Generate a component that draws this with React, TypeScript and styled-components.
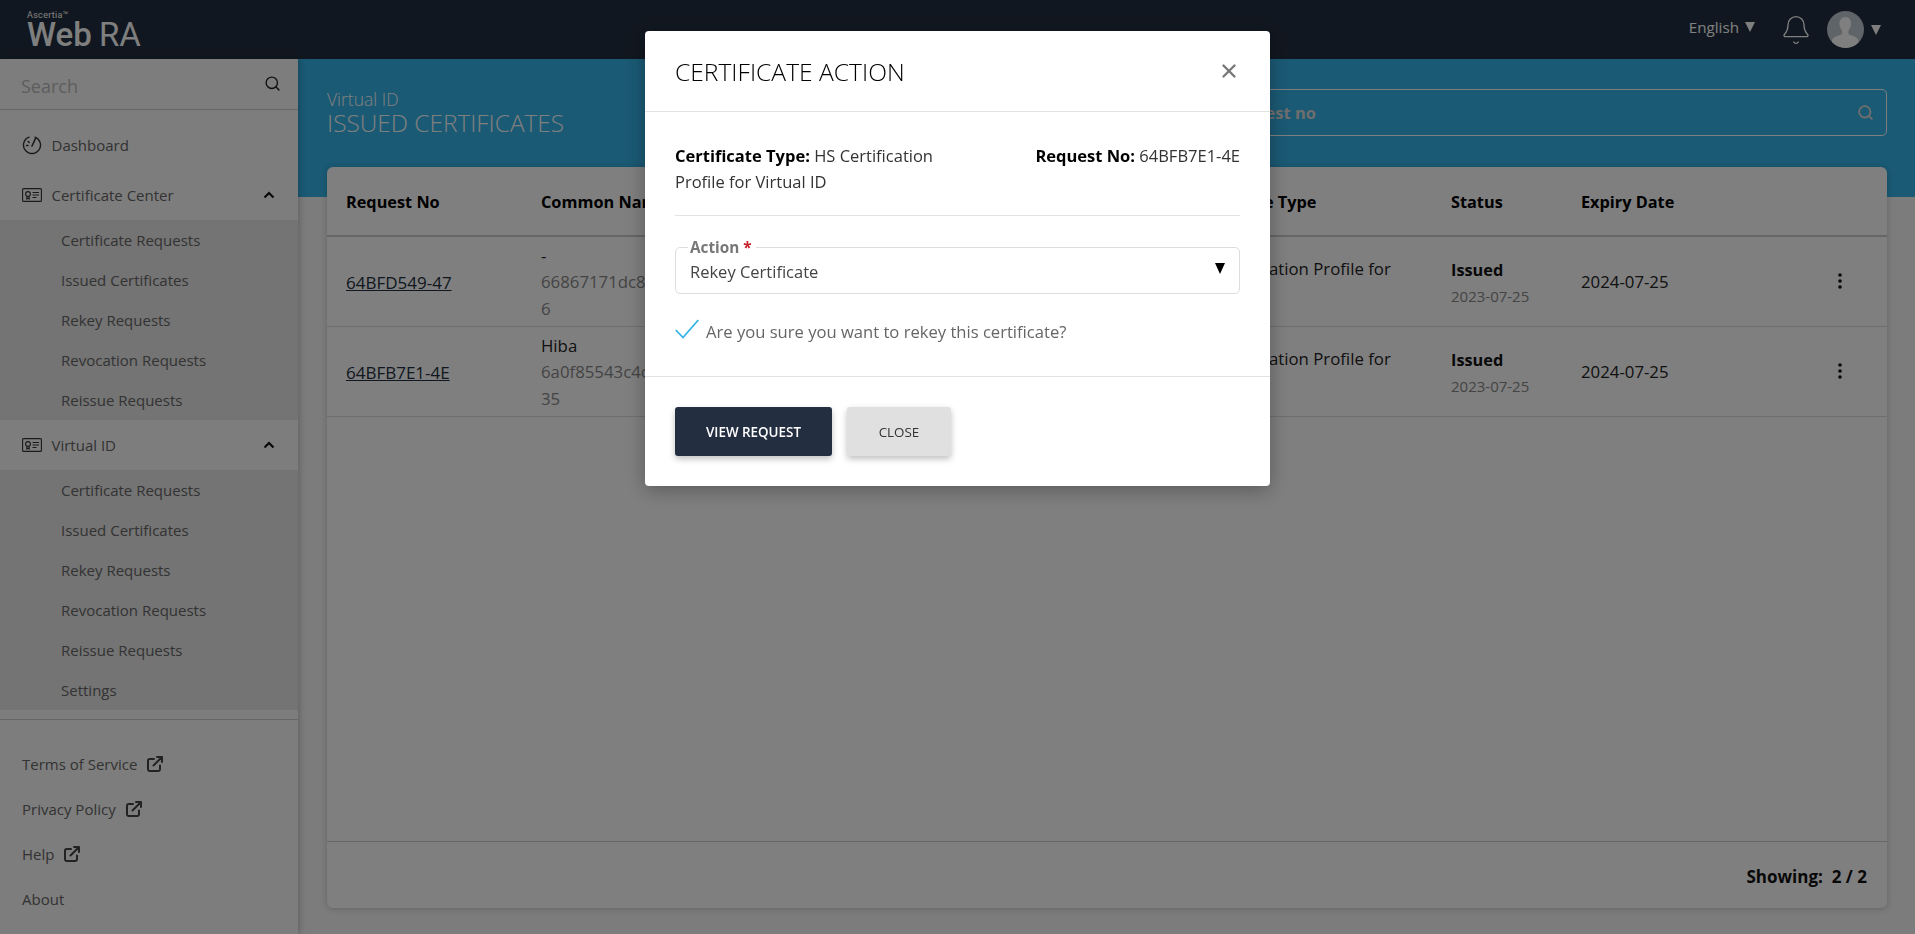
import React from "react";
import styled, { createGlobalStyle } from "styled-components";
import { Search as SearchIcon, Bell, X } from "lucide-react";

const Global = createGlobalStyle`
  html, body { margin: 0; height: 100%; overflow: hidden; }
  body { font-family: "Open Sans", "Liberation Sans", sans-serif; font-size: 15px; color: #333; background: #f8f8f8; }
  #root { height: 100%; }
  * { box-sizing: border-box; }
`;

const Page = styled.div`
  height: 100vh;
  display: flex;
  flex-direction: column;
`;
const TopBar = styled.header`
  height: 59px;
  flex: none;
  background: #232f40;
  display: flex;
  align-items: center;
  justify-content: space-between;
  padding: 0 34px 0 27px;
`;
const Logo = styled.div`
  color: #fff;
  display: flex;
  flex-direction: column;
  font-family: "Roboto", sans-serif;
  margin-top: -1px;
`;
const LogoSmall = styled.span`
  font-size: 9px;
  line-height: 10px;
  letter-spacing: 0.3px;
`;
const LogoBig = styled.span`
  font-size: 33px;
  line-height: 29px;
  font-weight: 500;
  word-spacing: -1px;
`;
const LogoThin = styled.span`
  font-weight: 400;
`;
const TopRight = styled.div`
  display: flex;
  align-items: center;
`;
const Lang = styled.span`
  color: #fff;
  font-size: 15.2px;
  margin: -6px 25px 0 0;
  display: flex;
  align-items: center;
  gap: 6px;
`;
const Caret = styled.span`
  width: 0;
  height: 0;
  border-left: 5px solid transparent;
  border-right: 5px solid transparent;
  border-top: 10px solid #fff;
`;
const Avatar = styled.span`
  width: 37px;
  height: 37px;
  border-radius: 50%;
  margin: 0 7px 0 15px;
  display: block;
  overflow: hidden;
`;
const Body = styled.div`
  flex: 1;
  display: flex;
  min-height: 0;
`;
const Sidebar = styled.aside`
  width: 298px;
  flex: none;
  background: #fbfbfb;
  box-shadow: 2px 0 6px rgba(0, 0, 0, 0.2);
  position: relative;
  z-index: 1;
  display: flex;
  flex-direction: column;
`;
const SideSearch = styled.div`
  height: 51px;
  flex: none;
  border-bottom: 1px solid #ccc;
  display: flex;
  align-items: center;
  justify-content: space-between;
  padding: 4px 17px 0 21px;
  font-size: 18px;
  color: #bbb;
`;
const SearchGlyph = styled.span`
  display: flex;
  margin-top: -6px;
`;
const Nav = styled.nav`
  padding-top: 10px;
  flex: none;
`;
const NavRow = styled.div`
  height: 50px;
  display: flex;
  align-items: center;
  padding: 0 23px 0 22px;
  color: #666;
  font-size: 15px;
  gap: 9.5px;
`;
const NavLabel = styled.span`
  flex: 1;
`;
const Sub = styled.div`
  background: #e8e8e8;
`;
const SubRow = styled.div`
  height: 40px;
  display: flex;
  align-items: center;
  padding-left: 61px;
  color: #666;
  font-size: 15px;
`;
const SideFooter = styled.div`
  margin-top: 9px;
  border-top: 1px solid #ccc;
  padding-top: 21px;
`;
const FootRow = styled.div`
  height: 45px;
  display: flex;
  align-items: center;
  gap: 10px;
  padding-left: 22px;
  color: #666;
  font-size: 15px;
`;
const Main = styled.main`
  flex: 1;
  min-width: 0;
  display: flex;
  flex-direction: column;
  padding-bottom: 26px;
`;
const Band = styled.div`
  height: 138px;
  flex: none;
  background: #35b4e8;
  display: flex;
  justify-content: space-between;
  padding: 30px 28px 0 29px;
`;
const Heading = styled.div`
  color: #fff;
  font-weight: 300;
  margin-top: -1px;
`;
const HeadSmall = styled.div`
  font-size: 17.5px;
  line-height: 22px;
`;
const HeadBig = styled.div`
  font-size: 24.4px;
  line-height: 26px;
`;
const SearchBox = styled.div`
  width: 761px;
  height: 47px;
  border: 1px solid #fff;
  border-radius: 5px;
  display: flex;
  align-items: center;
  justify-content: space-between;
  padding: 0 12px 0 16px;
  color: #ddd;
  font-weight: 700;
  font-size: 16.5px;
`;
const Card = styled.section`
  flex: 1;
  margin: -30px 28px 0 29px;
  background: #fff;
  border-radius: 6px;
  box-shadow: 0 1px 6px rgba(0, 0, 0, 0.2);
  display: flex;
  flex-direction: column;
  min-height: 0;
  position: relative;
`;
const Row = styled.div<{ $head?: boolean }>`
  display: grid;
  grid-template-columns: 195px 647px 263px 130px 200px 1fr;
  align-items: center;
  height: ${(p) => (p.$head ? "70px" : "90px")};
  padding: ${(p) => (p.$head ? "0" : "2px")} 0 0 19px;
  border-bottom: ${(p) => (p.$head ? "2px solid #ccc" : "1px solid #ddd")};
  font-size: 16.8px;
  color: #222;
`;
const HeadCell = styled.div`
  font-weight: 700;
  font-size: 16.3px;
  color: #000;
  padding-top: 1px;
`;
const Link = styled.a`
  color: #232f40;
  text-decoration: underline;
  font-weight: 500;
  font-size: 17px;
`;
const Cell = styled.div`
  line-height: 26.5px;
  white-space: nowrap;
`;
const Muted = styled.div`
  color: #888;
`;
const TypeCell = styled.div`
  align-self: start;
  padding: 17px 40px 0 0;
  line-height: 26px;
`;
const StatusName = styled.div`
  font-weight: 700;
  font-size: 16.3px;
  line-height: 26px;
  color: #111;
`;
const StatusDate = styled.div`
  color: #888;
  font-size: 15px;
  line-height: 26px;
`;
const Kebab = styled.div`
  justify-self: end;
  margin: -4px 45px 0 0;
  display: flex;
`;
const Spacer = styled.div`
  flex: 1;
`;
const CardFoot = styled.div`
  height: 67px;
  flex: none;
  border-top: 1px solid #ccc;
  display: flex;
  align-items: center;
  justify-content: flex-end;
  padding: 3px 20px 0 0;
  font-weight: 700;
  font-size: 17px;
  color: #111;
  white-space: pre;
`;
const Overlay = styled.div`
  position: fixed;
  inset: 0;
  z-index: 5;
  background: rgba(0, 0, 0, 0.5);
  display: flex;
  justify-content: center;
  align-items: flex-start;
  padding-top: 31px;
`;
const Dialog = styled.div`
  width: 625px;
  height: 455px;
  background: #fff;
  border-radius: 4px;
  box-shadow: 0 4px 20px rgba(0, 0, 0, 0.3);
  display: flex;
  flex-direction: column;
`;
const DialogHead = styled.div`
  height: 81px;
  flex: none;
  border-bottom: 1px solid #e2e2e2;
  display: flex;
  align-items: center;
  justify-content: space-between;
  padding: 0 30px 0 30px;
`;
const DialogTitle = styled.h2`
  margin: 0;
  font-size: 24.6px;
  font-weight: 300;
  color: #000;
`;
const DialogBody = styled.div`
  height: 265px;
  flex: none;
  padding: 31px 30px 0;
  border-bottom: 1px solid #e2e2e2;
`;
const Info = styled.div`
  display: flex;
  justify-content: space-between;
  line-height: 26px;
  height: 73px;
  border-bottom: 1px solid #e2e2e2;
  color: #333;
  font-size: 16.5px;
`;
const InfoLeft = styled.div`
  width: 270px;
`;
const B = styled.b`
  color: #000;
  font-weight: 700;
`;
const Field = styled.fieldset`
  margin: 31px 0 0;
  padding: 0 14px;
  height: 47px;
  border: 1px solid #ddd;
  border-radius: 5px;
  position: relative;
  display: flex;
  align-items: center;
  justify-content: space-between;
  min-inline-size: 0;
`;
const Legend = styled.legend`
  font-size: 15.3px;
  font-weight: 700;
  color: #777;
  padding: 0 4px 0 2px;
  margin-left: -2px;
  line-height: 1px;
  height: 1px;
`;
const Star = styled.span`
  color: #c8202a;
`;
const FieldValue = styled.span`
  color: #444;
  font-size: 16.5px;
  margin-top: 1px;
`;
const Tri = styled.span`
  width: 0;
  height: 0;
  border-left: 5.5px solid transparent;
  border-right: 5.5px solid transparent;
  border-top: 11px solid #000;
  margin: -4px 0 0 0;
`;
const CheckRow = styled.div`
  display: flex;
  align-items: center;
  gap: 7px;
  margin-top: 24px;
  color: #666;
  font-size: 16.6px;
  height: 26px;
`;
const CheckMark = styled.span`
  display: flex;
  margin-top: -4px;
`;
const DialogFoot = styled.div`
  padding: 30px 30px 0;
  display: flex;
  gap: 15px;
`;
const Btn = styled.button<{ $primary?: boolean }>`
  height: 49px;
  width: ${(p) => (p.$primary ? "157px" : "104px")};
  border: 0;
  border-radius: 3px;
  font-family: inherit;
  font-size: 13.4px;
  font-weight: ${(p) => (p.$primary ? 600 : 400)};
  background: ${(p) => (p.$primary ? "#232f40" : "#e0e0e0")};
  color: ${(p) => (p.$primary ? "#fff" : "#333")};
  box-shadow: 0 3px 6px rgba(0, 0, 0, 0.25);
`;

const Gauge = () => (
  <svg width="20" height="20" viewBox="0 0 20 20" fill="none" stroke="#333" strokeWidth="1.4" strokeLinecap="round">
    <path d="M7 2.1A8.500 8.500 0 1 0 13 2.1" />
    <path d="M10 11 13.500 3.500" strokeWidth="1.6" />
    <path d="M4.500 10.500h1.500M6.200 6.600l1 1" />
  </svg>
);
const CertIcon = () => (
  <svg width="20" height="16" viewBox="0 0 20 16" fill="none" stroke="#333" strokeWidth="1.1">
    <rect x="0.6" y="1.6" width="18.8" height="12.800" rx="1" />
    <circle cx="6" cy="7" r="2.400" />
    <path d="M4.800 9.500v2.500l1.200-.8 1.200.8V9.500M10.500 5.500h6.500M10.500 8h6.500M10.500 10.500h4" />
  </svg>
);
const Chevron = () => (
  <svg width="12" height="8" viewBox="0 0 12 8" fill="none" stroke="#111" strokeWidth="2.2">
    <path d="M1.500 6.500 6 2l4.500 4.500" />
  </svg>
);
const ExtLink = () => (
  <svg width="16" height="16" viewBox="0 0 16 16" fill="none" stroke="#444" strokeWidth="2" strokeLinecap="round" strokeLinejoin="round">
    <path d="M7 3H2.800A1.800 1.800 0 0 0 1 4.800v8.400A1.800 1.800 0 0 0 2.800 15h8.400a1.800 1.800 0 0 0 1.800-1.800V9.500" />
    <path d="M6.500 9.500 15 1M10 1h5v5" />
  </svg>
);
const Dots = () => (
  <svg width="4" height="16" viewBox="0 0 4 16" fill="#111">
    <circle cx="2" cy="2" r="1.8" />
    <circle cx="2" cy="8" r="1.8" />
    <circle cx="2" cy="14" r="1.8" />
  </svg>
);
const Person = () => (
  <svg width="37" height="37" viewBox="0 0 37 37">
    <rect width="37" height="37" fill="#bcc8cf" />
    <path fill="#fff" d="M18.500 6c3.600 0 5.600 2.800 5.600 6.600 0 3-1.200 5.400-2.600 6.800v3.600c1.500 1.400 8.500 2.200 10 6V37H5v-8c1.500-3.800 8.500-4.600 10-6v-3.600c-1.400-1.400-2.600-3.800-2.600-6.800C12.400 8.800 14.900 6 18.500 6z" />
  </svg>
);
const Check = () => (
  <svg width="24" height="20" viewBox="0 0 24 20" fill="none" stroke="#35b4e8" strokeWidth="1.8">
    <path d="M0.800 11 8 18.500 23.300 1" />
  </svg>
);

const certItems = ["Certificate Requests", "Issued Certificates", "Rekey Requests", "Revocation Requests", "Reissue Requests"];

export default function App() {
  return (
    <Page>
      <Global />
      <TopBar>
        <Logo>
          <LogoSmall>Ascertia™</LogoSmall>
          <LogoBig>
            Web <LogoThin>RA</LogoThin>
          </LogoBig>
        </Logo>
        <TopRight>
          <Lang>
            English <Caret />
          </Lang>
          <Bell size={32} color="#fff" strokeWidth={1} />
          <Avatar>
            <Person />
          </Avatar>
          <Caret />
        </TopRight>
      </TopBar>
      <Body>
        <Sidebar>
          <SideSearch>
            <span>Search</span>
            <SearchGlyph>
              <SearchIcon size={17} color="#222" strokeWidth={2} />
            </SearchGlyph>
          </SideSearch>
          <Nav>
            <NavRow>
              <Gauge />
              <NavLabel>Dashboard</NavLabel>
            </NavRow>
            <NavRow>
              <CertIcon />
              <NavLabel>Certificate Center</NavLabel>
              <Chevron />
            </NavRow>
            <Sub>
              {certItems.map((t) => (
                <SubRow key={t}>{t}</SubRow>
              ))}
            </Sub>
            <NavRow>
              <CertIcon />
              <NavLabel>Virtual ID</NavLabel>
              <Chevron />
            </NavRow>
            <Sub>
              {certItems.map((t) => (
                <SubRow key={t}>{t}</SubRow>
              ))}
              <SubRow>Settings</SubRow>
            </Sub>
          </Nav>
          <SideFooter>
            <FootRow>
              Terms of Service <ExtLink />
            </FootRow>
            <FootRow>
              Privacy Policy <ExtLink />
            </FootRow>
            <FootRow>
              Help <ExtLink />
            </FootRow>
            <FootRow>About</FootRow>
          </SideFooter>
        </Sidebar>
        <Main>
          <Band>
            <Heading>
              <HeadSmall>Virtual ID</HeadSmall>
              <HeadBig>ISSUED CERTIFICATES</HeadBig>
            </Heading>
            <SearchBox>
              <span>Search by request no</span>
              <SearchIcon size={17} color="#ddd" strokeWidth={2.6} />
            </SearchBox>
          </Band>
          <Card>
            <Row $head>
              <HeadCell>Request No</HeadCell>
              <HeadCell>Common Name</HeadCell>
              <HeadCell>Certificate Type</HeadCell>
              <HeadCell>Status</HeadCell>
              <HeadCell>Expiry Date</HeadCell>
              <HeadCell />
            </Row>
            <Row>
              <Link>64BFD549-47</Link>
              <Cell>
                <div>-</div>
                <Muted>66867171dc8</Muted>
                <Muted>6</Muted>
              </Cell>
              <TypeCell>HS Certification Profile for Virtual ID</TypeCell>
              <div>
                <StatusName>Issued</StatusName>
                <StatusDate>2023-07-25</StatusDate>
              </div>
              <Cell>2024-07-25</Cell>
              <Kebab>
                <Dots />
              </Kebab>
            </Row>
            <Row>
              <Link>64BFB7E1-4E</Link>
              <Cell>
                <div>Hiba</div>
                <Muted>6a0f85543c4c</Muted>
                <Muted>35</Muted>
              </Cell>
              <TypeCell>HS Certification Profile for Virtual ID</TypeCell>
              <div>
                <StatusName>Issued</StatusName>
                <StatusDate>2023-07-25</StatusDate>
              </div>
              <Cell>2024-07-25</Cell>
              <Kebab>
                <Dots />
              </Kebab>
            </Row>
            <Spacer />
            <CardFoot>Showing:  2 / 2</CardFoot>
          </Card>
        </Main>
      </Body>
      <Overlay>
        <Dialog>
          <DialogHead>
            <DialogTitle>CERTIFICATE ACTION</DialogTitle>
            <X size={22} color="#777" strokeWidth={2.6} />
          </DialogHead>
          <DialogBody>
            <Info>
              <InfoLeft>
                <B>Certificate Type:</B> HS Certification Profile for Virtual ID
              </InfoLeft>
              <div>
                <B>Request No:</B> 64BFB7E1-4E
              </div>
            </Info>
            <Field>
              <Legend>
                Action <Star>*</Star>
              </Legend>
              <FieldValue>Rekey Certificate</FieldValue>
              <Tri />
            </Field>
            <CheckRow>
              <CheckMark>
                <Check />
              </CheckMark>
              <span>Are you sure you want to rekey this certificate?</span>
            </CheckRow>
          </DialogBody>
          <DialogFoot>
            <Btn $primary>VIEW REQUEST</Btn>
            <Btn>CLOSE</Btn>
          </DialogFoot>
        </Dialog>
      </Overlay>
    </Page>
  );
}
